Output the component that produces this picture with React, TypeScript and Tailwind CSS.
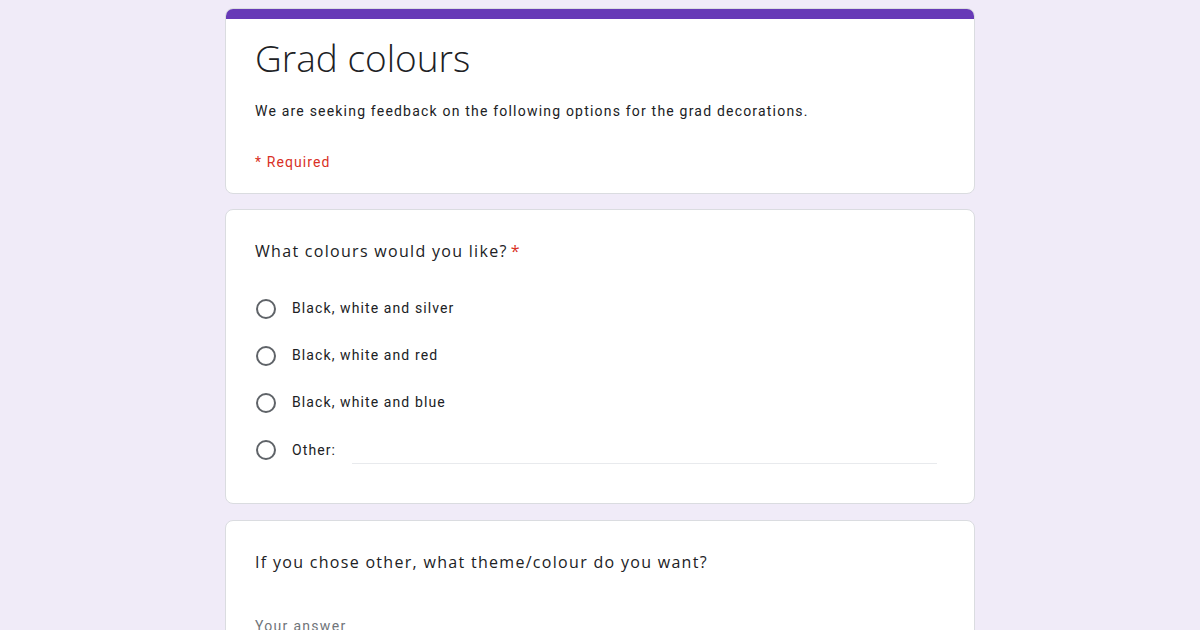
import React from 'react'

const options = ['Black, white and silver', 'Black, white and red', 'Black, white and blue']

function Radio() {
  return <div className="ml-px w-5 h-5 rounded-full border-2 border-[#5f6368] flex-shrink-0" />
}

export default function App() {
  return (
    <div className="w-full h-[630px] bg-[#f0ebf8] pt-2 overflow-hidden">
      <div className="mx-auto w-[750px] flex flex-col gap-4">
        <div className="rounded-lg bg-white border border-[#dadce0] overflow-hidden">
          <div className="h-[10px] bg-[#673ab7]" />
          <div className="px-[29px] pt-[19px] pb-[21px]">
            <h1 className="text-[37px] leading-[40px] text-[#202124] font-light font-['Open_Sans',sans-serif] tracking-[0px]">Grad colours</h1>
            <p className="mt-[23px] text-[14px] leading-5 text-[#202124] tracking-[1.2px] font-['Roboto',sans-serif]">
              We are seeking feedback on the following options for the grad decorations.
            </p>
            <p className="mt-[31px] text-[14px] leading-5 text-[#d93025] tracking-[1.1px] font-['Roboto',sans-serif]">* Required</p>
          </div>
        </div>

        <div className="-mt-px rounded-lg bg-white border border-[#dadce0] px-[29px] pt-[29px] pb-[29px]">
          <div className="text-[16px] leading-6 text-[#202124] tracking-[1.3px] font-['Open_Sans',sans-serif]">
            What colours would you like?<span className="text-[#d93025] pl-[3px]">*</span>
          </div>
          <div className="mt-[22px] flex flex-col">
            {options.map(o => (
              <div key={o} className="h-[47px] flex items-center gap-4 font-['Roboto',sans-serif] text-[14px] text-[#202124] tracking-[1.1px]">
                <Radio />
                <span>{o}</span>
              </div>
            ))}
            <div className="h-[48px] flex items-center gap-4 font-['Roboto',sans-serif] text-[14px] text-[#202124] tracking-[1.1px]">
              <Radio />
              <span>Other:</span>
              <div className="flex-1 h-7 border-b border-[#e8eaed] mr-[8px]" />
            </div>
          </div>
        </div>

        <div className="rounded-lg bg-white border border-[#dadce0] px-[29px] pt-[29px] pb-8">
          <div className="text-[16px] leading-6 text-[#202124] tracking-[1.3px] font-['Open_Sans',sans-serif]">
            If you chose other, what theme/colour do you want?
          </div>
          <div className="mt-[42px] text-[14px] leading-5 text-[#70757a] tracking-[1.3px] font-['Roboto',sans-serif]">Your answer</div>
        </div>
      </div>
    </div>
  )
}
